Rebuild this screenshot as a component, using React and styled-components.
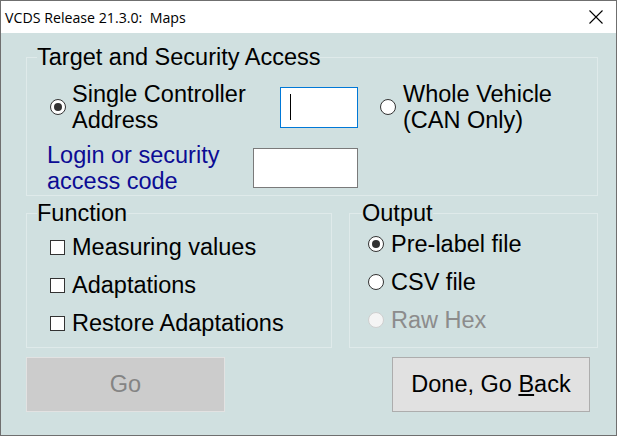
import React from "react";
import styled, { createGlobalStyle } from "styled-components";

const GlobalStyle = createGlobalStyle`
  html, body {
    margin: 0;
    padding: 0;
    background: #ffffff;
  }
  * {
    box-sizing: border-box;
  }
`;

const Window = styled.div`
  width: 617px;
  height: 436px;
  display: flex;
  flex-direction: column;
  border: 1px solid #6f6f6f;
  background: #d0e0e0;
  font-family: "Liberation Sans", Arial, sans-serif;
  font-size: 23.5px;
  color: #000;
`;

const TitleBar = styled.div`
  height: 32px;
  flex: none;
  display: flex;
  align-items: center;
  justify-content: space-between;
  padding: 0 13px 0 4px;
  background: #ffffff;
  font-family: "Open Sans", "Noto Sans", sans-serif;
  font-size: 14.2px;
  white-space: pre;
`;

const Body = styled.div`
  flex: 1;
  display: flex;
  flex-direction: column;
  padding: 11px 18px 0 25px;
`;

const Group = styled.fieldset`
  margin: 0;
  padding: 0 0 ${(p) => p.$bottom || 0}px 0;
  min-width: 0;
  border: 1px solid #dfeaea;
  width: ${(p) => (p.$width ? `${p.$width}px` : "auto")};
  flex: ${(p) => (p.$grow ? "1" : "none")};
`;

const Legend = styled.legend`
  margin-left: ${(p) => p.$offset || 10}px;
  padding: 0;
  line-height: 26px;
`;

const FieldRow = styled.div`
  display: flex;
  align-items: center;
  padding-left: ${(p) => p.$indent}px;
  margin-top: ${(p) => p.$top}px;
`;

const Option = styled.label`
  display: flex;
  align-items: center;
  gap: ${(p) => p.$gap || 6}px;
  width: ${(p) => (p.$width ? `${p.$width}px` : "auto")};
  margin-left: ${(p) => p.$left || 0}px;
  line-height: 26px;
  color: ${(p) => (p.$disabled ? "#8c8c8c" : "#000")};
`;

const Radio = styled.span`
  flex: none;
  width: 16px;
  height: 16px;
  border-radius: 50%;
  border: 1px solid ${(p) => (p.$disabled ? "#cfcfcf" : "#333")};
  background: ${(p) => (p.$disabled ? "#f4f4f4" : "#fff")};
  display: flex;
  align-items: center;
  justify-content: center;

  &::after {
    content: "";
    width: 8px;
    height: 8px;
    border-radius: 50%;
    background: ${(p) => (p.$checked ? "#333" : "transparent")};
  }
`;

const CheckBox = styled.span`
  flex: none;
  width: 15px;
  height: 15px;
  border: 1px solid #333;
  background: #fff;
`;

const TextInput = styled.div`
  flex: none;
  width: ${(p) => p.$w}px;
  height: ${(p) => p.$h}px;
  background: #fff;
  border: 1px solid ${(p) => (p.$focused ? "#0078d7" : "#7a7a7a")};
  display: flex;
  align-items: center;
  padding-left: 9px;
`;

const Caret = styled.span`
  width: 1px;
  height: 26px;
  background: #000;
`;

const CodeLabel = styled.div`
  width: 206px;
  line-height: 26px;
  color: #0c0c94;
`;

const LowerRow = styled.div`
  display: flex;
  gap: 17px;
  margin-top: 4px;
`;

const List = styled.div`
  display: flex;
  flex-direction: column;
  gap: 12px;
  padding: ${(p) => p.$top}px 0 0 ${(p) => p.$indent}px;
`;

const ButtonRow = styled.div`
  display: flex;
  justify-content: space-between;
  margin: 9px 8px 0 0;
`;

const Button = styled.div`
  width: ${(p) => p.$w}px;
  height: 55px;
  display: flex;
  align-items: center;
  justify-content: center;
  background: ${(p) => (p.$disabled ? "#cccccc" : "#e1e1e1")};
  border: 1px solid ${(p) => (p.$disabled ? "#e2e2e2" : "#adadad")};
  color: ${(p) => (p.$disabled ? "#848484" : "#000")};
  white-space: pre;
`;

const Close = () => (
  <svg width="14" height="14" viewBox="0 0 14 14">
    <path d="M0.5 0.5 L13.5 13.5 M13.5 0.5 L0.5 13.5" stroke="#000" strokeWidth="1.1" />
  </svg>
);

export default function App() {
  return (
    <>
      <GlobalStyle />
      <Window>
        <TitleBar>
          <span>VCDS Release 21.3.0:  Maps</span>
          <Close />
        </TitleBar>
        <Body>
          <Group $bottom={1}>
            <Legend>Target and Security Access</Legend>
            <FieldRow $indent={23} $top={11}>
              <Option $width={230}>
                <Radio $checked />
                <span>
                  Single Controller
                  <br />
                  Address
                </span>
              </Option>
              <TextInput $w={78} $h={41} $focused>
                <Caret />
              </TextInput>
              <Option $left={22} $gap={7}>
                <Radio />
                <span>
                  Whole Vehicle
                  <br />
                  (CAN Only)
                </span>
              </Option>
            </FieldRow>
            <FieldRow $indent={20} $top={9}>
              <CodeLabel>
                Login or security
                <br />
                access code
              </CodeLabel>
              <TextInput $w={105} $h={40} />
            </FieldRow>
          </Group>
          <LowerRow>
            <Group $width={306} $bottom={11}>
              <Legend>Function</Legend>
              <List $top={8} $indent={23}>
                <Option $gap={7}>
                  <CheckBox />
                  Measuring values
                </Option>
                <Option $gap={7}>
                  <CheckBox />
                  Adaptations
                </Option>
                <Option $gap={7}>
                  <CheckBox />
                  Restore Adaptations
                </Option>
              </List>
            </Group>
            <Group $grow>
              <Legend $offset={12}>Output</Legend>
              <List $top={5} $indent={18}>
                <Option $gap={7}>
                  <Radio $checked />
                  Pre-label file
                </Option>
                <Option $gap={7}>
                  <Radio />
                  CSV file
                </Option>
                <Option $gap={7} $disabled>
                  <Radio $disabled />
                  Raw Hex
                </Option>
              </List>
            </Group>
          </LowerRow>
          <ButtonRow>
            <Button $w={199} $disabled>
              Go
            </Button>
            <Button $w={198}>
              <span>
                Done, Go <u>B</u>ack
              </span>
            </Button>
          </ButtonRow>
        </Body>
      </Window>
    </>
  );
}
